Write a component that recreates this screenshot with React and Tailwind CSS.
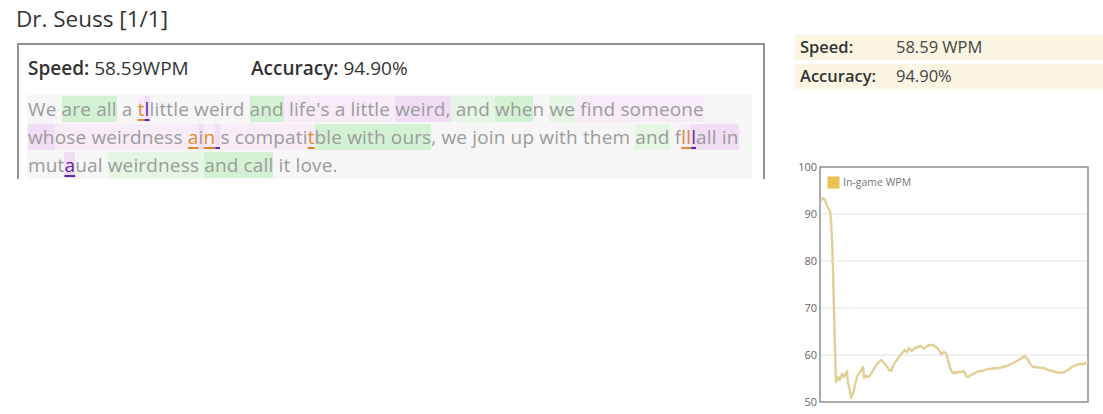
const lines = [
  [
    ['We ', null],
    ['are all', 'g'],
    [' a ', null],
    ['t', 'eo'],
    ['l', 'ep'],
    ['little weird ', null],
    ['and', 'g'],
    [" life's a little ", 'lp'],
    ['weird,', 'p'],
    [' and ', 'lg'],
    ['whe', 'g'],
    ['n ', null],
    ['we', 'lg'],
    [' find someone', 'lp'],
  ],
  [
    ['wh', 'p'],
    ['ose weirdness ', 'lp'],
    ['a', 'eo'],
    ['i', 'p'],
    ['n', 'eo'],
    [' ', 'ep'],
    ['s compati', 'lp'],
    ['t', 'eo'],
    ['ble with ours', 'g'],
    [', we join up with them ', null],
    ['and', 'lg'],
    [' f', null],
    ['l', 'eo'],
    ['l', 'eo'],
    ['l', 'ep'],
    ['all in', 'p'],
  ],
  [
    ['mut', null],
    ['a', 'ep'],
    ['ual ', null],
    ['weirdness ', 'lg'],
    ['and call', 'g'],
    [' it love.', null],
  ],
];

const segClass = {
  g: 'bg-[#d3f2d3]',
  lg: 'bg-[#e5f6e5]',
  p: 'bg-[#f2def4]',
  lp: 'bg-[#f7ecf8]',
  eo: 'text-[#e08a2b] underline decoration-2 underline-offset-[3px] decoration-[#e08a2b] bg-[#f7ecf8]',
  ep: 'text-[#5b2aa8] underline decoration-2 underline-offset-[3px] decoration-[#5b2aa8] bg-[#f2def4]',
};

// wpm samples in page pixels (x, y)
const pts = [
  [821, 201], [823, 198], [825, 200], [827, 206], [830, 211], [831, 220], [832, 240], [833, 270],
  [834, 310], [835, 350], [836, 382], [838, 377], [840, 380], [842, 374], [844, 377], [846, 373],
  [847, 371], [848, 383], [850, 391], [851, 398], [853, 394], [855, 385], [857, 377], [859, 373],
  [861, 371], [863, 367], [864, 378], [866, 376], [869, 377], [872, 372], [875, 367], [878, 363],
  [881, 360], [883, 362], [886, 365], [889, 370], [891, 371], [893, 366], [896, 361], [899, 357],
  [902, 353], [905, 350], [907, 352], [909, 348], [912, 351], [915, 348], [918, 347], [921, 346],
  [924, 349], [927, 346], [930, 345], [933, 345], [936, 347], [939, 350], [941, 354], [944, 352],
  [946, 353], [948, 360], [950, 368], [952, 372], [955, 373], [958, 372], [961, 372], [964, 371],
  [966, 376], [968, 377], [971, 375], [975, 373], [979, 371], [983, 371], [987, 369], [991, 369],
  [995, 368], [999, 368], [1003, 367], [1007, 366], [1011, 364], [1015, 362], [1019, 360], [1023, 357],
  [1025, 356], [1028, 360], [1031, 365], [1033, 367], [1036, 367], [1040, 368], [1044, 368], [1048, 370],
  [1052, 371], [1056, 372], [1060, 373], [1064, 372], [1068, 370], [1072, 367], [1076, 365], [1080, 364],
  [1084, 364], [1088, 362],
];

function WpmChart() {
  const ticks = [100, 90, 80, 70, 60, 50];
  const yOf = (v) => 12 + (100 - v) * 4.7;
  const poly = pts.map(([x, y]) => `${x - 795},${y - 155}`).join(' ');
  return (
    <svg width="308" height="258" viewBox="0 0 308 258" className="block">
      {ticks.slice(1, 5).map((t) => (
        <line key={t} x1="25" x2="293" y1={yOf(t)} y2={yOf(t)} stroke="#e2e2e2" strokeWidth="1" />
      ))}
      <rect x="25" y="12" width="268" height="235" fill="none" stroke="#8f8f8f" strokeWidth="1.5" />
      {ticks.map((t) => (
        <text key={t} x="22" y={yOf(t) + 4} textAnchor="end" fontSize="11" fill="#666" fontFamily="Open Sans, sans-serif">
          {t}
        </text>
      ))}
      <rect x="32.5" y="21.5" width="12" height="12" fill="#ebc14f" stroke="#f3dfa6" strokeWidth="1" />
      <text x="48" y="31" fontSize="10.5" fill="#777" fontFamily="Open Sans, sans-serif">In-game WPM</text>
      <polyline points={poly} fill="none" stroke="#e2cf96" strokeWidth="2.4" strokeLinejoin="round" />
    </svg>
  );
}

export default function App() {
  return (
    <div className="flex w-[1103px] h-[414px] bg-white font-['Open_Sans',sans-serif] text-[#333] overflow-hidden">
      {/* race result */}
      <div className="w-[795px] shrink-0 pl-[17px] pt-[4px]">
        <h1 className="text-[22.5px] leading-[30px] text-[#333] -ml-[1px]">Dr. Seuss [1/1]</h1>
        <div className="mt-[9px] w-[748px] border-2 border-b-0 border-[#939393]">
          <div className="flex pl-[9px] pt-[11px] pb-[15px] text-[19px] leading-[24px]">
            <div className="w-[223px]">
              <span className="font-semibold">Speed:</span> 58.59WPM
            </div>
            <div>
              <span className="font-semibold">Accuracy:</span> 94.90%
            </div>
          </div>
          <div className="ml-[8px] mr-[11px] bg-[#f6f6f6] pl-[1px] text-[19px] leading-[28px] text-[#9b9b9b] tracking-[0.15px]">
            {lines.map((segs, i) => (
              <div key={i} className="whitespace-pre">
                {segs.map(([t, k], j) => (
                  <span key={j} className={k ? segClass[k] : ''}>{t}</span>
                ))}
              </div>
            ))}
          </div>
        </div>
      </div>

      {/* summary */}
      <div className="w-[308px] shrink-0 pt-[35px]">
        <div className="flex flex-col gap-[4px] text-[16.5px]">
          <div className="flex h-[25px] items-center bg-[#fbf6e4] pl-[5px]">
            <span className="w-[96px] font-semibold text-[#333]">Speed:</span>
            <span className="text-[#444]">58.59 WPM</span>
          </div>
          <div className="flex h-[25px] items-center bg-[#fbf6e4] pl-[5px]">
            <span className="w-[96px] font-semibold text-[#333]">Accuracy:</span>
            <span className="text-[#444]">94.90%</span>
          </div>
        </div>
        <div className="mt-[66px]">
          <WpmChart />
        </div>
      </div>
    </div>
  );
}
